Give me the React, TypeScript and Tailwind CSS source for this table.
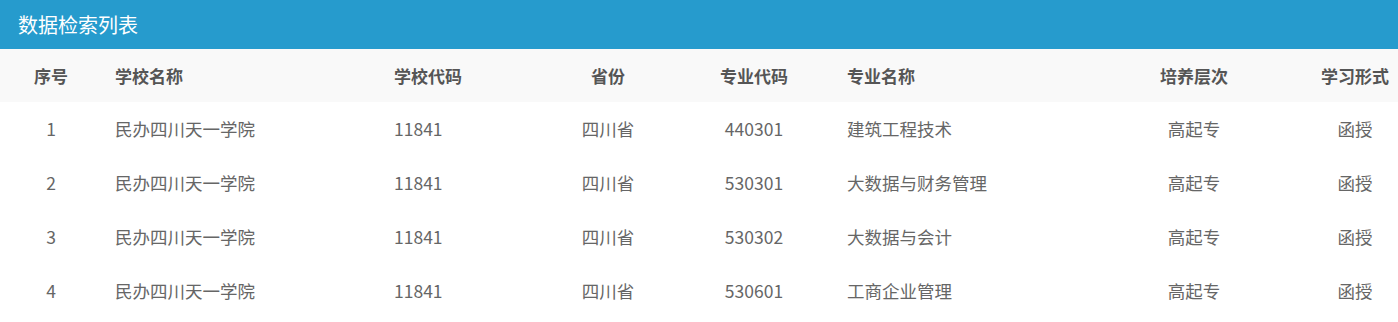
import React from "react";

const cols = [
  { w: "w-[102px]", align: "text-center" },
  { w: "w-[279px]", align: "text-left pl-[13px]" },
  { w: "w-[161px]", align: "text-left pl-[13px]" },
  { w: "w-[132px]", align: "text-center" },
  { w: "w-[160px]", align: "text-center" },
  { w: "w-[242px]", align: "text-left pl-[13px]" },
  { w: "w-[236px]", align: "text-center" },
  { w: "w-[86px]", align: "text-center" },
];

const headers = ["序号", "学校名称", "学校代码", "省份", "专业代码", "专业名称", "培养层次", "学习形式"];

const rows = [
  ["1", "民办四川天一学院", "11841", "四川省", "440301", "建筑工程技术", "高起专", "函授"],
  ["2", "民办四川天一学院", "11841", "四川省", "530301", "大数据与财务管理", "高起专", "函授"],
  ["3", "民办四川天一学院", "11841", "四川省", "530302", "大数据与会计", "高起专", "函授"],
  ["4", "民办四川天一学院", "11841", "四川省", "530601", "工商企业管理", "高起专", "函授"],
];

export default function App() {
  return (
    <div
      className="w-[1398px] h-[322px] bg-white overflow-hidden"
      style={{ fontFamily: '"Noto Sans CJK SC", "Noto Sans", sans-serif' }}
    >
      <div className="h-[49px] bg-[#269bcd] flex items-center pl-[18px] text-white text-[20px]">
        数据检索列表
      </div>
      <div className="flex h-[53px] items-center bg-[#f9f9f9] text-[#555] font-bold text-[17px]">
        {headers.map((h, i) => (
          <div key={i} className={`${cols[i].w} ${cols[i].align} shrink-0 whitespace-nowrap`}>
            {h}
          </div>
        ))}
      </div>
      {rows.map((r, ri) => (
        <div key={ri} className="flex h-[54px] items-center text-[#666] text-[17.5px]">
          {r.map((c, i) => (
            <div key={i} className={`${cols[i].w} ${cols[i].align} shrink-0 whitespace-nowrap`}>
              {c}
            </div>
          ))}
        </div>
      ))}
    </div>
  );
}
